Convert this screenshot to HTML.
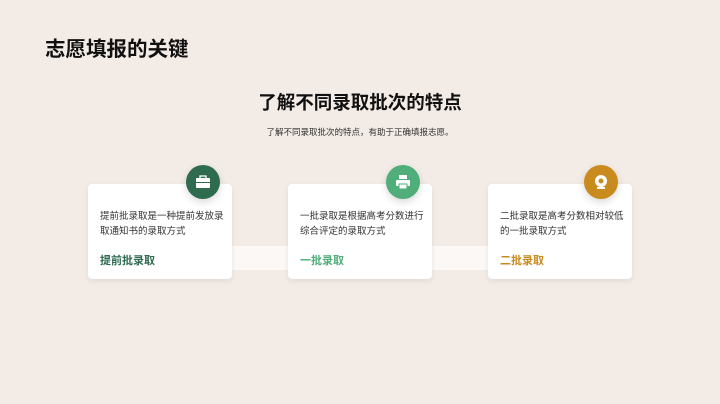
<!DOCTYPE html>
<html><head><meta charset="utf-8"><style>
*{margin:0;padding:0;box-sizing:border-box}
body{width:720px;height:404px;background:#f3ebe5;font-family:"Liberation Sans","Noto Sans CJK SC",sans-serif;position:relative;overflow:hidden;color:#222}
.t{position:absolute;left:45px;top:32px;font-size:20.5px;font-weight:bold;color:#111}
.h{position:absolute;left:0;width:720px;top:89px;text-align:center;font-size:18.5px;font-weight:bold;color:#111}
.s{position:absolute;left:0;width:720px;top:126px;text-align:center;font-size:8.5px;color:#333}
.bar{position:absolute;top:246px;height:24px;background:#fbf8f6}
.c{position:absolute;top:184px;width:144px;height:95px;background:#fff;border-radius:4px;box-shadow:0 2px 6px rgba(0,0,0,.08)}
.c p{position:absolute;left:12px;top:25px;width:127px;font-size:9.5px;line-height:15px;color:#333}
.c b{position:absolute;left:12px;top:68px;font-size:11px}
.i{position:absolute;top:165px;width:34px;height:34px;border-radius:50%;box-shadow:0 3px 8px rgba(0,0,0,.15)}
.i svg{position:absolute;left:9px;top:9px}
</style></head><body>
<div class="t">志愿填报的关键</div>
<div class="h">了解不同录取批次的特点</div>
<div class="s">了解不同录取批次的特点，有助于正确填报志愿。</div>
<div class="bar" style="left:230px;width:60px"></div>
<div class="bar" style="left:430px;width:60px"></div>
<div class="c" style="left:88px"><p>提前批录取是一种提前发放录取通知书的录取方式</p><b style="color:#2e6b4f">提前批录取</b></div>
<div class="c" style="left:288px"><p>一批录取是根据高考分数进行综合评定的录取方式</p><b style="color:#4fae7a">一批录取</b></div>
<div class="c" style="left:488px"><p>二批录取是高考分数相对较低的一批录取方式</p><b style="color:#c98a1e">二批录取</b></div>
<div class="i" style="left:186px;background:#2e6b4f"><svg width="16" height="16" viewBox="0 0 16 16"><rect x="1" y="4" width="14" height="10" rx="1" fill="#fff"/><rect x="5" y="2" width="6" height="3" fill="none" stroke="#fff" stroke-width="1.3"/><rect x="1" y="8" width="14" height="1" fill="#2e6b4f"/></svg></div>
<div class="i" style="left:386px;background:#4fae7a"><svg width="16" height="16" viewBox="0 0 16 16"><rect x="4" y="1" width="8" height="4" fill="#fff"/><rect x="1" y="6" width="14" height="6" rx="1" fill="#fff"/><rect x="4" y="10" width="8" height="5" fill="#fff" stroke="#4fae7a"/></svg></div>
<div class="i" style="left:584px;background:#c98a1e"><svg width="16" height="16" viewBox="0 0 16 16"><circle cx="8" cy="7" r="6" fill="#fff"/><circle cx="8" cy="7" r="2.5" fill="#c98a1e"/><rect x="4" y="13" width="8" height="2" fill="#fff"/></svg></div>
</body></html>
